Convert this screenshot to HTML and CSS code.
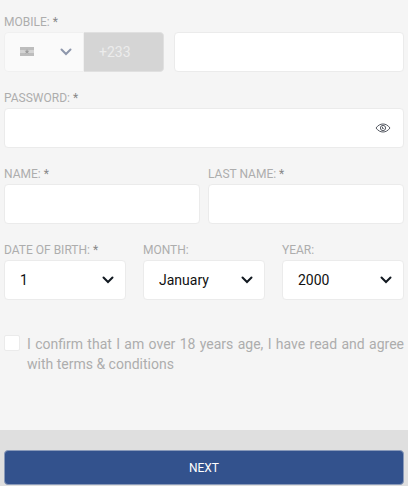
FILE: index.html
```html
<!DOCTYPE html>
<html lang="en">
<head>
  <meta charset="UTF-8">
  <meta name="viewport" content="width=device-width, initial-scale=1.0">
  <title>Register</title>
  <link rel="stylesheet" href="styles.css">
</head>
<body>
  <form class="form">
    <div class="fields">
      <div class="field">
        <label for="mobile">MOBILE: <span class="req">*</span></label>
        <div class="mobile-row">
          <div class="prefix">
            <div class="country">
              <select aria-label="Country" disabled>
                <option></option>
              </select>
              <svg class="flag" viewBox="0 0 14 9" aria-hidden="true">
                <rect width="14" height="9" fill="#bdbdbd"/>
                <rect y="3" width="14" height="3" fill="#d4d4d4"/>
                <path d="M7 2l.7 1.800h1.800L8 5l.6 1.800L7 5.700l-1.600 1.100L6 5 4.500 3.800h1.800z" fill="#9c9c9c"/>
              </svg>
              <svg class="chevron" viewBox="0 0 12 8" aria-hidden="true"><path d="M1.500 1.500L6 6l4.500-4.500"/></svg>
            </div>
            <input type="text" class="code" value="+233" aria-label="Country code" disabled>
          </div>
          <input type="tel" id="mobile" class="box">
        </div>
      </div>

      <div class="field">
        <label for="password">PASSWORD: <span class="req">*</span></label>
        <div class="password">
          <input type="password" id="password" class="box">
          <button type="button" class="eye" aria-label="Show password">
            <svg viewBox="0 0 16 10" aria-hidden="true">
              <path d="M1 5c2-2.700 4.300-4 7-4s5 1.300 7 4c-2 2.700-4.300 4-7 4S3 7.700 1 5z"/>
              <circle cx="8" cy="5" r="2.600"/>
              <path d="M7.500 3.800v1.700h1.200"/>
            </svg>
          </button>
        </div>
      </div>

      <div class="row">
        <div class="field">
          <label for="name">NAME: <span class="req">*</span></label>
          <input type="text" id="name" class="box">
        </div>
        <div class="field">
          <label for="lastname">LAST NAME: <span class="req">*</span></label>
          <input type="text" id="lastname" class="box">
        </div>
      </div>

      <div class="row row-date">
        <div class="field">
          <label for="day">DATE OF BIRTH: <span class="req">*</span></label>
          <div class="select">
            <select id="day" class="box"><option>1</option></select>
            <svg class="chevron" viewBox="0 0 12 8" aria-hidden="true"><path d="M1.500 1.500L6 6l4.500-4.500"/></svg>
          </div>
        </div>
        <div class="field">
          <label for="month">MONTH:</label>
          <div class="select">
            <select id="month" class="box"><option>January</option></select>
            <svg class="chevron" viewBox="0 0 12 8" aria-hidden="true"><path d="M1.500 1.500L6 6l4.500-4.500"/></svg>
          </div>
        </div>
        <div class="field">
          <label for="year">YEAR:</label>
          <div class="select">
            <select id="year" class="box"><option>2000</option></select>
            <svg class="chevron" viewBox="0 0 12 8" aria-hidden="true"><path d="M1.500 1.500L6 6l4.500-4.500"/></svg>
          </div>
        </div>
      </div>
    </div>

    <div class="confirm">
      <input type="checkbox" id="confirm">
      <label for="confirm">I confirm that I am over 18 years age, I have read and agree with terms &amp; conditions</label>
    </div>

    <div class="footer">
      <button type="submit" class="btn">NEXT</button>
    </div>
  </form>
</body>
</html>
```

FILE: styles.css
```css
* {
  box-sizing: border-box;
}
body {
  margin: 0;
  font-family: Roboto, sans-serif;
  background-color: #f5f5f5;
  color: #adadad;
}
input, select, button {
  font-family: inherit;
  margin: 0;
}
.form {
  display: flex;
  flex-direction: column;
  min-height: 100vh;
}
.fields {
  display: flex;
  flex-direction: column;
  gap: 18px;
  padding: 14px 4px 0;
}
.field {
  display: flex;
  flex-direction: column;
  gap: 2px;
  flex: 1;
  min-width: 0;
}
.field label {
  font-size: 12px;
  line-height: 16px;
}
.req {
  color: #888;
}
.box {
  width: 100%;
  height: 40px;
  padding: 0 15px;
  border: 1px solid #ebebeb;
  border-radius: 4px;
  background-color: white;
  color: #111;
  font-size: 14px;
}
.row {
  display: flex;
  gap: 8px;
}
.row-date {
  gap: 17px;
}

/* mobile */
.mobile-row {
  display: flex;
  gap: 10px;
}
.mobile-row .box {
  flex: 1;
  min-width: 0;
}
.prefix {
  display: flex;
  width: 40%;
  height: 40px;
  border-radius: 4px;
  overflow: hidden;
}
.country {
  display: flex;
  flex: 1;
  position: relative;
}
.country select {
  width: 100%;
  appearance: none;
  border: 1px solid #f0f0f0;
  border-radius: 4px 0 0 4px;
  background-color: #fafafa;
  opacity: 1;
}
.flag {
  position: absolute;
  left: 16px;
  top: 15px;
  width: 14px;
  height: 9px;
}
.code {
  width: 50%;
  padding: 0 15px;
  border: 1px solid #e0e0e0;
  border-left: none;
  border-radius: 0 4px 4px 0;
  background-color: #d5d5d5;
  color: #ececec;
  font-size: 14px;
}

/* dropdowns */
.select {
  display: flex;
  position: relative;
}
.select select {
  appearance: none;
}
.chevron {
  position: absolute;
  right: 12px;
  top: 16px;
  width: 12px;
  height: 8px;
  fill: none;
  stroke: #111820;
  stroke-width: 2;
  stroke-linecap: round;
  pointer-events: none;
}
.country .chevron {
  stroke: #8d96ab;
}

/* password */
.password {
  display: flex;
  position: relative;
}
.eye {
  position: absolute;
  right: 13px;
  top: 10px;
  display: flex;
  align-items: center;
  height: 20px;
  padding: 0;
  border: none;
  background: none;
  cursor: pointer;
}
.eye svg {
  width: 16px;
  height: 10px;
  fill: none;
  stroke: #555962;
  stroke-width: 1;
}

/* terms */
.confirm {
  display: flex;
  gap: 7px;
  padding: 34px 4px 56px;
  font-size: 14px;
  line-height: 20px;
}
.confirm input {
  appearance: none;
  flex-shrink: 0;
  width: 16px;
  height: 16px;
  margin-top: 1px;
  border: 1px solid #ebebeb;
  border-radius: 2px;
  background-color: white;
}
.confirm input:checked {
  background-color: #33528d;
}
.confirm label {
  text-align: justify;
}

.footer {
  flex: 1;
  padding: 20px 4px 1px;
  background-color: #dfdfdf;
}
.btn {
  display: block;
  width: 100%;
  height: 35px;
  border: 1px solid #8a9ab9;
  border-radius: 4px;
  background-color: #33528d;
  color: white;
  font-size: 12px;
  cursor: pointer;
}
```
